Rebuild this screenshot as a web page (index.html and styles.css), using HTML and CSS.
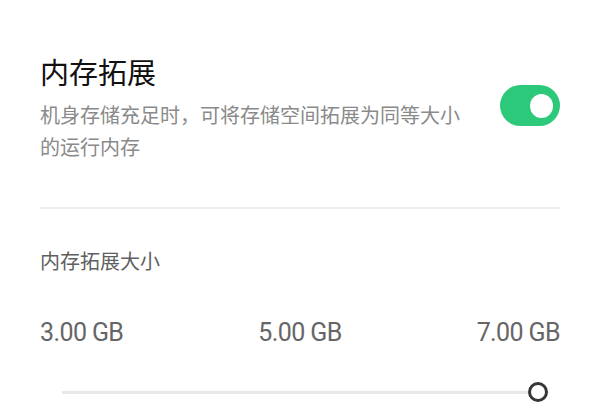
FILE: index.html
```html
<!DOCTYPE html>
<html lang="zh-CN">
<head>
    <meta charset="UTF-8">
    <meta name="viewport" content="width=device-width, initial-scale=1.0">
    <title>内存拓展</title>
    <link rel="stylesheet" href="styles.css">
</head>
<body>
    <div class="page">
        <div class="setting-row">
            <div class="setting-text">
                <div class="setting-title">内存拓展</div>
                <div class="setting-desc">机身存储充足时，可将存储空间拓展为同等大小的运行内存</div>
            </div>
            <div class="switch on">
                <div class="switch-knob"></div>
            </div>
        </div>

        <div class="divider"></div>

        <div class="section-title">内存拓展大小</div>

        <div class="size-labels">
            <span>3.00 GB</span>
            <span>5.00 GB</span>
            <span>7.00 GB</span>
        </div>

        <div class="slider">
            <div class="slider-track">
                <div class="slider-thumb"></div>
            </div>
        </div>
    </div>
</body>
</html>
```

FILE: styles.css
```css
body {
    margin: 0;
    background-color: #fff;
    font-family: "Noto Sans CJK SC", "Noto Sans", sans-serif;
}
.page {
    padding: 53px 40px 0 40px;
}
.setting-row {
    display: flex;
    align-items: center;
    gap: 40px;
}
.setting-text {
    flex: 1;
}
.setting-title {
    font-size: 29px;
    line-height: 36px;
    color: #111;
}
.setting-desc {
    margin-top: 10px;
    font-size: 20px;
    line-height: 32px;
    color: #8a8a8a;
}
.switch {
    width: 60px;
    height: 41px;
    border-radius: 21px;
    background-color: #d6d6d6;
    display: flex;
    align-items: center;
    justify-content: flex-end;
    padding-right: 7px;
    box-sizing: border-box;
    margin-bottom: 5px;
}
.switch.on {
    background-color: #2dc97b;
}
.switch-knob {
    width: 23px;
    height: 24px;
    border-radius: 50%;
    background: #fff;
}
.divider {
    height: 2px;
    background-color: #eeeeee;
    margin-top: 44px;
}
.section-title {
    margin-top: 36px;
    font-size: 20px;
    line-height: 32px;
    color: #606060;
}
.size-labels {
    margin-top: 41px;
    display: flex;
    justify-content: space-between;
    font-family: Roboto, "Noto Sans", sans-serif;
    font-size: 25px;
    line-height: 30px;
    letter-spacing: -0.6px;
    color: #666;
}
.slider {
    margin-top: 32px;
    height: 24px;
    padding: 0 22px;
    display: flex;
    align-items: center;
}
.slider-track {
    position: relative;
    flex: 1;
    height: 3px;
    background-color: #e8e8e8;
}
.slider-thumb {
    position: absolute;
    right: -10px;
    top: 50%;
    width: 20px;
    height: 20px;
    margin-top: -10px;
    box-sizing: border-box;
    border: 3px solid #363636;
    border-radius: 50%;
    background: #fff;
}
```
